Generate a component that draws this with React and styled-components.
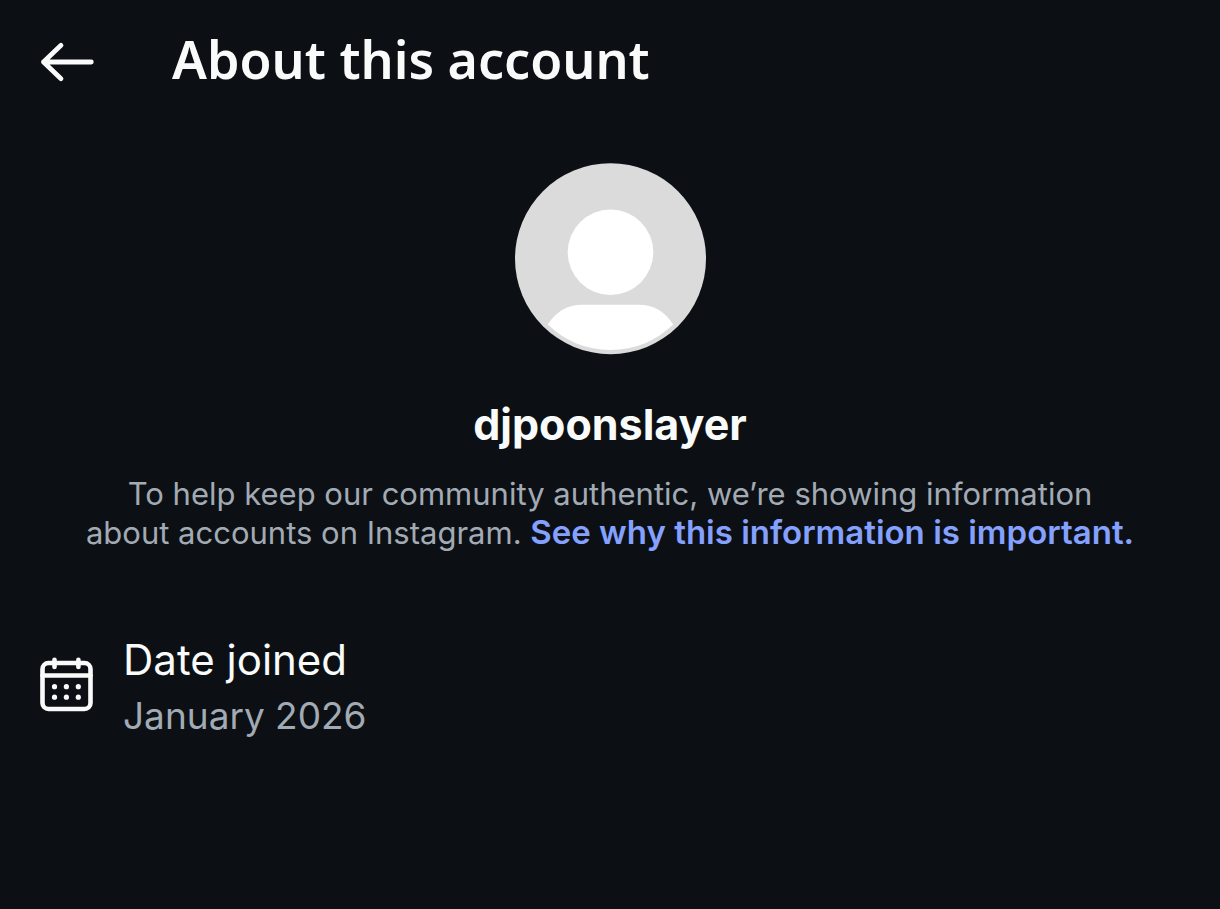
import React from "react";
import styled, { createGlobalStyle } from "styled-components";

const GlobalStyle = createGlobalStyle`
  * { box-sizing: border-box; }
  body {
    margin: 0;
    background: #0c1014;
    color: #f9fafa;
    font-family: Inter, "Noto Sans", sans-serif;
  }
`;

const Page = styled.div`
  min-height: 100vh;
`;

const Header = styled.header`
  display: flex;
  align-items: center;
  gap: 76px;
  padding: 27px 38px 29px;
`;

const BackButton = styled.button`
  display: flex;
  padding: 0;
  border: 0;
  background: none;
  color: inherit;
  cursor: pointer;
`;

const Title = styled.h1`
  margin: 0;
  font-family: "Noto Sans", sans-serif;
  font-size: 52px;
  line-height: 64px;
  font-weight: 600;
`;

const Profile = styled.main`
  display: flex;
  flex-direction: column;
  align-items: center;
  padding: 43px 40px 0;
`;

const Username = styled.h2`
  margin: 43px 0 0;
  font-size: 43px;
  line-height: 52px;
  font-weight: 700;
`;

const Description = styled.p`
  margin: 24px 0 0;
  max-width: 1050px;
  color: #a2aab4;
  font-size: 31px;
  line-height: 39px;
  text-align: center;
`;

const InfoLink = styled.a`
  color: #85a1ff;
  font-size: 33px;
  font-weight: 600;
  text-decoration: none;
`;

const Details = styled.section`
  display: flex;
  align-items: center;
  gap: 27px;
  padding: 80px 38px 0;
`;

const DetailTitle = styled.h3`
  margin: 0;
  font-size: 42px;
  line-height: 56px;
  font-weight: 400;
`;

const DetailValue = styled.p`
  margin: 0;
  color: #a2aab4;
  font-size: 37px;
  line-height: 56px;
`;

export default function App() {
  return (
    <Page>
      <GlobalStyle />
      <Header>
        <BackButton type="button" aria-label="Back">
          <svg width="58" height="52" viewBox="0 0 58 52" fill="none" stroke="currentColor" strokeWidth="4.8" strokeLinecap="round" strokeLinejoin="round">
            <path d="M23 12.3 5.5 29 23 45.7M5.5 29h47.8" />
          </svg>
        </BackButton>
        <Title>About this account</Title>
      </Header>
      <Profile>
        <svg width="192" height="192" viewBox="0 0 192 192" role="img" aria-label="Profile picture">
          <circle cx="96.5" cy="95.7" r="95.5" fill="#dbdbdb" />
          <circle cx="96.5" cy="89.2" r="42.8" fill="#fff" />
          <path d="M33.8 161.5Q46.5 141.8 68 141.8H125Q146.5 141.8 159.2 161.5C142 178 121 187 96.5 187S51 178 33.8 161.5Z" fill="#fff" />
        </svg>
        <Username>djpoonslayer</Username>
        <Description>
          To help keep our community authentic, we’re showing information about accounts on Instagram.{" "}
          <InfoLink href="#why">See why this information is important.</InfoLink>
        </Description>
      </Profile>
      <Details>
        <svg width="58" height="64" viewBox="0 0 58 64" fill="none" stroke="currentColor" strokeWidth="4.6" strokeLinecap="round" aria-hidden="true">
          <rect x="4.5" y="7" width="48" height="46" rx="6" />
          <path d="M4.5 19.5h48M16.5 3.7v7.3M40.4 3.7v7.3" />
          <g fill="currentColor" stroke="none">
            <circle cx="16.5" cy="30.7" r="2.6" />
            <circle cx="28.4" cy="30.7" r="2.6" />
            <circle cx="40.3" cy="30.7" r="2.6" />
            <circle cx="16.5" cy="41.2" r="2.6" />
            <circle cx="28.4" cy="41.2" r="2.6" />
            <circle cx="40.3" cy="41.2" r="2.6" />
          </g>
        </svg>
        <div>
          <DetailTitle>Date joined</DetailTitle>
          <DetailValue>January 2026</DetailValue>
        </div>
      </Details>
    </Page>
  );
}
